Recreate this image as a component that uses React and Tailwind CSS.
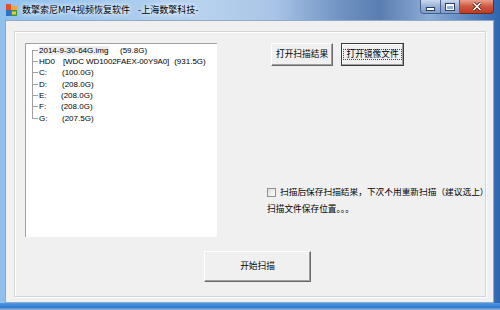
const cjk = "font-['Noto_Sans_CJK_SC',sans-serif]";
const latin = "font-['Liberation_Sans','Noto_Sans_CJK_SC',sans-serif]";

function TreeRow({ first, last, children }) {
  return (
    <div className="flex h-[11.33px] items-stretch">
      <div className="flex w-[6px] shrink-0 flex-col">
        <div className={"h-1/2 border-b border-[#a0a0a0] " + (first ? "" : "border-l")}></div>
        <div className={"h-1/2 border-[#a0a0a0] " + (last ? "" : "border-l")}></div>
      </div>
      <div className="ml-[1px] flex items-center whitespace-pre">{children}</div>
    </div>
  );
}

function Button({ focused, className, children }) {
  return (
    <div
      className={
        "flex items-center justify-center bg-[#f0f0f0] " +
        (focused
          ? "border border-[#3c3c3c] shadow-[inset_-1px_-1px_0_#a0a0a0,inset_1px_1px_0_#fff] "
          : "border-t border-l border-b border-r border-t-[#fff] border-l-[#fff] border-b-[#696969] border-r-[#696969] shadow-[inset_-1px_-1px_0_#a0a0a0] ") +
        className
      }
    >
      {focused ? (
        <div className="flex items-center justify-center border border-dotted border-[#444] px-[2px]">{children}</div>
      ) : (
        children
      )}
    </div>
  );
}

export default function App() {
  const drives = [
    ["C:", "(100.0G)", "w-[23px]"],
    ["D:", "(208.0G)", "w-[23px]"],
    ["E:", "(208.0G)", "w-[22px]"],
    ["F:", "(208.0G)", "w-[22px]"],
    ["G:", "(207.5G)", "w-[23px]"],
  ];

  return (
    <div className="flex h-[310px] w-[500px] flex-col overflow-hidden bg-[linear-gradient(90deg,#8fc0ee_0%,#b8d2ee_40%,#a9c4e6_55%,#6f93c3_68%,#5a7eb0_76%,#8eadd8_86%,#2f66ad_100%)] pl-[5px] pr-[6px]">
      {/* title bar */}
      <div className="flex h-[20px] items-start">
        <div className="mt-[3px] flex h-[14px] w-[14px] items-center justify-center">
          <svg width="14" height="14" viewBox="0 0 14 14">
            <rect x="1" y="1" width="5" height="6" fill="#e0502a" />
            <rect x="6" y="3" width="6" height="4" fill="#f2a43a" />
            <rect x="1" y="7" width="5" height="6" fill="#2f6fc8" />
            <rect x="6" y="7" width="6" height="6" fill="#3d9a3a" />
            <rect x="7" y="8.5" width="4" height="3" fill="#e8c84a" />
          </svg>
        </div>
        <div className={"ml-[3px] mt-[4px] flex whitespace-nowrap text-[9px] leading-[12px] text-black [text-shadow:0_0_4px_#fff,0_0_6px_#fff] " + cjk}>
          <span>数擎索尼MP4视频恢复软件</span>
          <span className="ml-[8px]">-上海数擎科技-</span>
        </div>
        <div className="ml-auto flex h-[14px]">
          <div className="flex w-[40px] overflow-hidden rounded-bl-[4px] border border-t-0 border-[#4a628a] bg-[linear-gradient(180deg,#c9d9ee,#97b2d7_50%,#7f9ccb)]">
            <div className="flex w-[20px] items-center justify-center border-r border-[#4a628a]">
              <div className="mt-[4px] h-[2px] w-[7px] bg-white shadow-[0_0_0_1px_#2d3f5e]"></div>
            </div>
            <div className="flex w-[19px] items-center justify-center">
              <div className="h-[6px] w-[8px] border border-t-2 border-white shadow-[0_0_0_1px_#2d3f5e]"></div>
            </div>
          </div>
          <div className="flex w-[34px] items-center justify-center rounded-br-[4px] border border-l-0 border-t-0 border-[#6b2a20] bg-[linear-gradient(180deg,#e8a08e,#d0573f_50%,#c13a22)]">
            <svg width="10" height="9" viewBox="0 0 10 9">
              <path d="M1.5 1 L8.5 8 M8.5 1 L1.5 8" stroke="#3a1a14" strokeWidth="3" />
              <path d="M1.5 1 L8.5 8 M8.5 1 L1.5 8" stroke="#fff" strokeWidth="1.6" />
            </svg>
          </div>
        </div>
      </div>

      {/* client */}
      <div className="flex flex-1 flex-col border border-[#8fa8c8] bg-[#f0f0f0] pb-[5px] pl-[8px] pr-[7px] pt-[10px]">
        <div className="flex flex-1 flex-col border border-[#d5d5d5] shadow-[1px_1px_0_#fff,inset_1px_1px_0_#fff] pl-[10px] pt-[11px]">
          <div className="flex">
            {/* list */}
            <div className={"h-[194px] w-[192px] shrink-0 border-l border-t border-[#a0a0a0] bg-white pl-[6px] pt-[1px] text-[8px] leading-none text-black " + latin}>
              <TreeRow first>
                <span className="w-[81px] shrink-0">
                  <span className="bg-[#eeeeee] pr-[1px]">2014-9-30-64G.img</span>
                </span>
                <span className="shrink-0">(59.8G)</span>
              </TreeRow>
              <TreeRow>
                <span className="w-[24px] shrink-0">HD0</span>
                <span className="mr-[5px] shrink-0 tracking-[-0.1px]">[WDC WD1002FAEX-00Y9A0]</span>
                <span className="shrink-0">(931.5G)</span>
              </TreeRow>
              {drives.map((d, i) => (
                <TreeRow key={d[0]} last={i === drives.length - 1}>
                  <span className={"shrink-0 " + d[2]}>{d[0]}</span>
                  <span className="shrink-0">{d[1]}</span>
                </TreeRow>
              ))}
            </div>

            {/* right column */}
            <div className={"ml-[50px] flex min-w-0 flex-1 flex-col text-[8.7px] leading-none text-black " + cjk}>
              <div className="ml-[4px] flex gap-[8px]">
                <Button className="h-[23px] w-[62px]">打开扫描结果</Button>
                <Button focused className="h-[23px] w-[63px]">打开镜像文件</Button>
              </div>
              <div className="mt-[122px] flex items-center overflow-hidden whitespace-nowrap">
                <div className="h-[9px] w-[9px] shrink-0 border border-[#8e8f8f] bg-[linear-gradient(135deg,#dcdcdc,#fff)]"></div>
                <span className="ml-[4px]">扫描后保存扫描结果，下次不用重新扫描（建议选上）</span>
              </div>
              <div className="mt-[8px]">扫描文件保存位置。。。</div>
            </div>
          </div>
          <div className={"ml-[179px] mt-[14px] text-[8.7px] leading-none text-black " + cjk}>
            <Button className="h-[31px] w-[107px]">开始扫描</Button>
          </div>
        </div>
      </div>

      {/* bottom frame */}
      <div className="-ml-[5px] -mr-[6px] h-[7px] bg-[linear-gradient(180deg,#4e9be6,#2f79cf_60%,#9fb8d6)]"></div>
    </div>
  );
}
